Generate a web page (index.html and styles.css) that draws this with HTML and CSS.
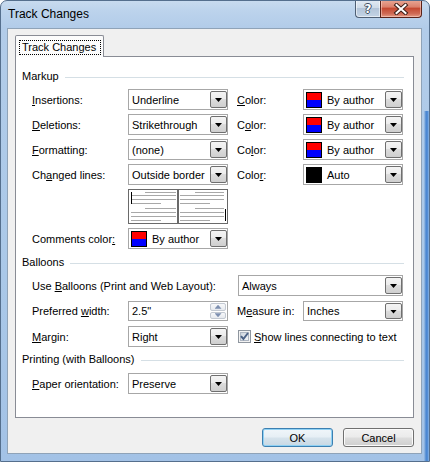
FILE: index.html
```html
<!DOCTYPE html>
<html>
<head>
<meta charset="utf-8">
<title>Track Changes</title>
<link rel="stylesheet" href="styles.css">
</head>
<body>
<div class="window">
  <div class="titlebar">
    <div class="title">Track Changes</div>
    <div class="caption">
      <div class="cap-btn help"><span>?</span></div>
      <div class="cap-btn close">
        <svg width="16" height="12" viewBox="0 0 16 12"><path d="M3.5 2 L12.5 10 M12.5 2 L3.5 10" stroke="#3d1f18" stroke-width="4" stroke-linecap="square" fill="none"/><path d="M3.5 2 L12.5 10 M12.5 2 L3.5 10" stroke="#ffffff" stroke-width="2" stroke-linecap="square" fill="none"/></svg>
      </div>
    </div>
  </div>
  <div class="client">
    <div class="tabstrip"><div class="tab"><span class="focus">Track Changes</span></div></div>
    <div class="panel">
      <div class="group-head">Markup</div>
      <div class="form markup">
        <div class="lbl"><span><u>I</u>nsertions:</span></div>
        <div class="combo"><span class="val">Underline</span><span class="drop"></span></div>
        <div class="lbl lbl2"><span><u>C</u>olor:</span></div>
        <div class="combo"><span class="swatch split"></span><span class="val sw">By author</span><span class="drop"></span></div>

        <div class="lbl"><span><u>D</u>eletions:</span></div>
        <div class="combo"><span class="val">Strikethrough</span><span class="drop"></span></div>
        <div class="lbl lbl2"><span>C<u>o</u>lor:</span></div>
        <div class="combo"><span class="swatch split"></span><span class="val sw">By author</span><span class="drop"></span></div>

        <div class="lbl"><span><u>F</u>ormatting:</span></div>
        <div class="combo"><span class="val">(none)</span><span class="drop"></span></div>
        <div class="lbl lbl2"><span>Co<u>l</u>or:</span></div>
        <div class="combo"><span class="swatch split"></span><span class="val sw">By author</span><span class="drop"></span></div>

        <div class="lbl"><span>Ch<u>a</u>nged lines:</span></div>
        <div class="combo"><span class="val">Outside border</span><span class="drop"></span></div>
        <div class="lbl lbl2"><span>Colo<u>r</u>:</span></div>
        <div class="combo"><span class="swatch black"></span><span class="val sw">Auto</span><span class="drop"></span></div>

        <div class="preview">
          <svg width="100" height="35" viewBox="0 0 100 35">
            <rect x="0.5" y="0.5" width="99" height="34" fill="#ffffff" stroke="#6a6a6a"/>
            <line x1="50" y1="0" x2="50" y2="35" stroke="#6a6a6a" stroke-width="2"/>
            <g fill="#a8a8a8">
              <rect x="17" y="3" width="31" height="1"/>
              <rect x="3" y="6" width="45" height="1"/>
              <rect x="3" y="10" width="45" height="1"/>
              <rect x="3" y="14" width="30" height="1"/>
              <rect x="17" y="19" width="31" height="1"/>
              <rect x="3" y="23" width="45" height="1"/>
              <rect x="3" y="27" width="45" height="1"/>
              <rect x="3" y="31" width="30" height="1"/>
              <rect x="67" y="3" width="29" height="1"/>
              <rect x="52" y="6" width="44" height="1"/>
              <rect x="52" y="10" width="44" height="1"/>
              <rect x="52" y="14" width="30" height="1"/>
              <rect x="67" y="19" width="29" height="1"/>
              <rect x="52" y="23" width="44" height="1"/>
              <rect x="52" y="27" width="44" height="1"/>
              <rect x="52" y="31" width="30" height="1"/>
            </g>
            <rect x="3" y="3" width="1" height="12" fill="#000"/>
            <rect x="97" y="20" width="1" height="12" fill="#000"/>
          </svg>
        </div>

        <div class="lbl first"><span>Comments color<u>:</u></span></div>
        <div class="combo"><span class="swatch split"></span><span class="val sw">By author</span><span class="drop"></span></div>
      </div>

      <div class="group-head gap-top">Balloons</div>
      <div class="form balloons">
        <div class="lbl span2"><span>Use <u>B</u>alloons (Print and Web Layout):</span></div>
        <div class="combo wide"><span class="val">Always</span><span class="drop"></span></div>

        <div class="lbl"><span>Preferred <u>w</u>idth:</span></div>
        <div class="combo spin"><span class="val">2.5"</span><span class="spin-btns"><span class="sb up"></span><span class="sb down"></span></span></div>
        <div class="lbl lbl2"><span>M<u>e</u>asure in:</span></div>
        <div class="combo"><span class="val">Inches</span><span class="drop"></span></div>

        <div class="lbl"><span><u>M</u>argin:</span></div>
        <div class="combo"><span class="val">Right</span><span class="drop"></span></div>
        <div class="check">
          <svg class="box" width="13" height="13" viewBox="0 0 13 13">
            <defs><linearGradient id="cg" x1="0" y1="0" x2="1" y2="1"><stop offset="0" stop-color="#cbd3dc"/><stop offset="1" stop-color="#f6f7f9"/></linearGradient></defs>
            <rect x="0.5" y="0.5" width="12" height="12" fill="#f3f3f3" stroke="#8f969f"/>
            <rect x="2.5" y="2.5" width="8" height="8" fill="url(#cg)" stroke="#aeb6c2"/>
            <path d="M3 6.2 L5.4 9 L10 3" stroke="#4c6286" stroke-width="2" fill="none"/>
          </svg>
          <span><u>S</u>how lines connecting to text</span>
        </div>
      </div>

      <div class="group-head gap-top2">Printing (with Balloons)</div>
      <div class="form printing">
        <div class="lbl"><span><u>P</u>aper orientation:</span></div>
        <div class="combo"><span class="val">Preserve</span><span class="drop"></span></div>
      </div>
    </div>
    <div class="buttons">
      <div class="btn default">OK</div>
      <div class="btn">Cancel</div>
    </div>
  </div>
</div>
</body>
</html>
```

FILE: styles.css
```css
* { box-sizing: border-box; }
html, body { margin: 0; padding: 0; }
body {
  width: 430px;
  height: 462px;
  overflow: hidden;
  background: #ffffff;
  font-family: "Liberation Sans", Arial, sans-serif;
  font-size: 11px;
  color: #000000;
}
u { text-decoration: underline; text-underline-offset: 1px; }

.window {
  width: 430px;
  height: 462px;
  display: flex;
  flex-direction: column;
  border: 1px solid #556f8d;
  border-radius: 7px 7px 0 0;
  overflow: hidden;
  background:
    linear-gradient(90deg, transparent 423px, #6f9fd8 424px, #3f7fd0 426px, #8cb6e4 428px, transparent 429px) 0 110px / 100% 100% no-repeat,
    linear-gradient(180deg, #c8dbef 0, #bcd3ec 10px, #b2cce9 27px, #aac8e8 60%, #a3c2e6 100%);
}

/* title bar */
.titlebar {
  height: 27px;
  display: flex;
  align-items: flex-start;
  padding-left: 7px;
}
.title {
  padding-top: 5px;
  font-size: 12px;
  line-height: 16px;
  color: #000;
}
.caption {
  margin-left: auto;
  margin-right: 7px;
  margin-top: -1px;
  display: flex;
}
.cap-btn {
  height: 18px;
  display: flex;
  align-items: center;
  justify-content: center;
  border: 1px solid #4f5f74;
  border-top: none;
}
.help {
  width: 25px;
  border-right: none;
  border-radius: 0 0 0 4px;
  background: linear-gradient(180deg, #e3ebf4 0, #cfdbe8 45%, #b3c4d8 50%, #c4d4e6 100%);
  box-shadow: inset 0 0 0 1px rgba(255,255,255,0.55);
}
.help span {
  font-family: "DejaVu Sans", sans-serif;
  font-weight: bold;
  font-size: 12px;
  line-height: 12px;
  color: #ffffff;
  text-shadow: 1px 0 #3f4d60, -1px 0 #3f4d60, 0 1px #3f4d60, 0 -1px #3f4d60;
}
.close {
  width: 42px;
  border-color: #5a2219;
  border-radius: 0 0 4px 0;
  background: linear-gradient(180deg, #e9a896 0, #dc826d 40%, #c54a32 50%, #cf6a55 80%, #e49a83 100%);
  box-shadow: inset 0 0 0 1px rgba(255,220,210,0.5);
}
.close svg { display: block; }

/* client area */
.client {
  flex: 1;
  margin: 0 7px 7px 6px;
  background: #f0f0f0;
  border: 1px solid #8fa3b8;
  padding: 6px 7px 0 7px;
  display: flex;
  flex-direction: column;
}
.tabstrip { display: flex; }
.tab {
  position: relative;
  z-index: 1;
  width: 89px;
  height: 22px;
  margin-bottom: -1px;
  border: 1px solid #898c95;
  border-bottom: none;
  border-radius: 2px 2px 0 0;
  background: #fcfcfc;
  padding: 4px 0 0 3px;
}
.focus {
  display: block;
  width: 82px;
  height: 15px;
  border: 1px dotted #000;
  padding-left: 2px;
  line-height: 13px;
}
.panel {
  height: 362px;
  border: 1px solid #898c95;
  background: #ffffff;
  padding: 12px 9px 0 6px;
}

/* group heading with rule */
.group-head {
  display: flex;
  align-items: center;
  height: 15px;
  line-height: 15px;
}
.group-head::after {
  content: "";
  flex: 1;
  height: 1px;
  margin-left: 6px;
  margin-top: 1px;
  background: #d5dfe5;
}
.gap-top { margin-top: 6px; }
.gap-top2 { margin-top: 5px; }

/* form grids */
.form {
  margin-left: 10px;
  display: grid;
  grid-template-columns: 96px 100px 75px 100px;
  row-gap: 4px;
}
.markup {
  margin-top: 5px;
  grid-template-rows: 21px 21px 21px 21px 35px 21px;
}
.balloons {
  margin-top: 5px;
  grid-template-rows: 21px 20px 21px;
  row-gap: 5px;
}
.printing {
  margin-top: 6px;
  grid-template-rows: 21px;
}
.lbl {
  display: flex;
  align-items: center;
  white-space: nowrap;
}
.lbl.first { grid-column: 1; }
.lbl2 { padding-left: 9px; }
.span2 { grid-column: 1 / span 2; }
.preview { grid-column: 2; }
.preview svg { display: block; }

/* combo boxes */
.combo {
  display: flex;
  align-items: center;
  border: 1px solid #a7a7a7;
  background: #ffffff;
  white-space: nowrap;
}
.combo.wide {
  grid-column: 3 / span 2;
  margin-left: 10px;
}
.val { padding-left: 3px; }
.val.sw { padding-left: 5px; }
.swatch {
  width: 16px;
  height: 16px;
  margin-left: 2px;
  border: 1px solid #000;
}
.swatch.split { background: linear-gradient(180deg, #ff0000 50%, #0000ff 50%); }
.swatch.black { background: #000; }
.drop {
  margin-left: auto;
  align-self: stretch;
  margin-top: 1px;
  margin-bottom: 1px;
  margin-right: 0;
  width: 17px;
  border: 1px solid #6f6f6f;
  border-radius: 2px;
  background: linear-gradient(180deg, #f4f4f4 0, #ececec 45%, #dcdcdc 50%, #cfcfcf 100%);
  display: flex;
  align-items: center;
  justify-content: center;
}
.drop::after {
  content: "";
  width: 7px;
  height: 4px;
  margin-top: 1px;
  background: #000;
  clip-path: polygon(0 0, 100% 0, 50% 100%);
}

/* spin box */
.spin-btns {
  align-self: stretch;
  width: 16px;
  margin: 1px 1px 1px auto;
  display: flex;
  flex-direction: column;
  gap: 1px;
}
.sb {
  flex: 1;
  border: 1px solid #c3c9d2;
  border-radius: 2px;
  background: linear-gradient(180deg, #f7f8fa, #e7eaef);
  display: flex;
  align-items: center;
  justify-content: center;
}
.sb::after {
  content: "";
  width: 7px;
  height: 4px;
  background: #7d8fb0;
}
.sb.up::after { clip-path: polygon(50% 0, 100% 100%, 0 100%); }
.sb.down::after { clip-path: polygon(0 0, 100% 0, 50% 100%); }

/* checkbox */
.check {
  grid-column: 3 / span 2;
  padding-left: 10px;
  display: flex;
  align-items: center;
  gap: 3px;
  white-space: nowrap;
}
.check .box { display: block; flex: none; }

/* dialog buttons */
.buttons {
  display: flex;
  justify-content: flex-end;
  gap: 10px;
  margin-top: 10px;
}
.btn {
  width: 71px;
  height: 19px;
  border: 1px solid #707070;
  border-radius: 3px;
  background: linear-gradient(180deg, #f2f2f2 0, #ebebeb 48%, #dddddd 52%, #cfcfcf 100%);
  box-shadow: inset 0 0 0 1px #fbfbfb;
  display: flex;
  align-items: center;
  justify-content: center;
}
.btn.default {
  border-color: #3c7fb1;
  background: linear-gradient(180deg, #f0f6fa 0, #e6eff5 48%, #d6e3ec 52%, #c8d8e4 100%);
  box-shadow: inset 0 0 0 1px #8fd1f4;
}
```
